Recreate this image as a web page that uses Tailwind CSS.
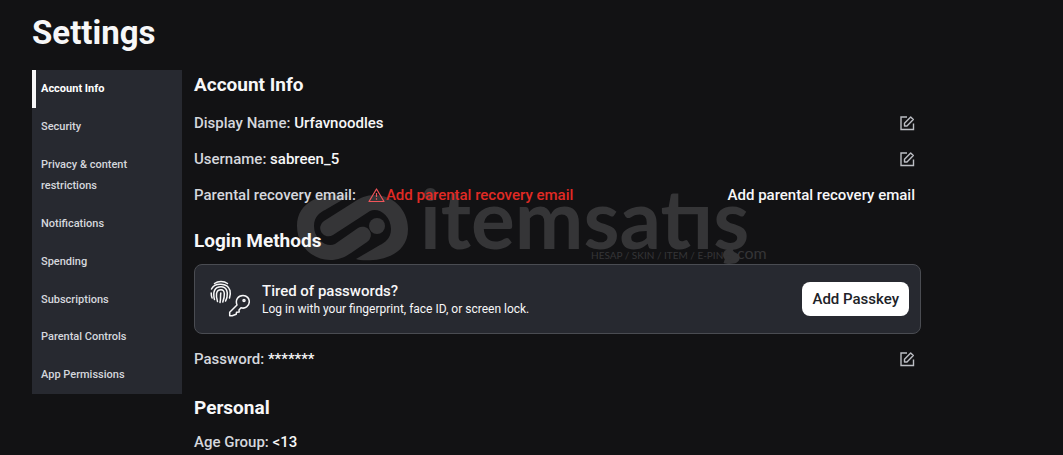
<!DOCTYPE html>
<html lang="en">
<head>
    <meta charset="UTF-8">
    <meta name="viewport" content="width=device-width, initial-scale=1.0">
    <title>Settings</title>
    <script src="https://cdn.jsdelivr.net/npm/@tailwindcss/browser@4"></script>
</head>
<body class="bg-[#121214] font-['Roboto',sans-serif] text-[#f7f7f8] overflow-hidden">
    <!-- Shared icons -->
    <svg class="hidden">
        <symbol id="edit" viewBox="0 0 16 16">
            <path d="M8 2H2v12.500h12.500V8.500" fill="none" stroke="currentColor" stroke-width="1.4"/>
            <path d="M5.500 11V8.200L11.700 2l2.600 2.600L8 11z" fill="none" stroke="currentColor" stroke-width="1.4" stroke-linejoin="round"/>
        </symbol>
    </svg>

    <div class="relative px-8 pt-3">
        <!-- Watermark -->
        <div class="absolute left-[297px] top-[180px] text-[#353537] select-none" aria-hidden="true">
            <svg class="block overflow-visible" width="472" height="84" viewBox="0 0 472 84">
                <g fill="currentColor">
                    <path d="M52 16C45 13 0 12 0 46C0 66 16 80 33 80C42 80 48 77 54 73L70 62A8 8 0 0 0 61 48L38 64C30 68 17 60 17 46C17 36 24 32 28 30Z"/>
                    <path d="M59 79C66 82 111 83 111 49C111 29 95 15 78 15C69 15 63 18 57 22L27 41A8 8 0 0 0 36 55L73 31C81 27 94 35 94 49C94 59 87 63 83 65Z"/>
                    <circle cx="80" cy="46" r="8"/>
                    <circle cx="432" cy="75" r="6"/>
                </g>
                <text x="123" y="69" fill="currentColor" font-family="Lato" font-weight="700" font-size="82">itemsatış</text>
                <text x="294" y="79" fill="currentColor" font-family="Lato" font-size="10">HESAP / SKIN / ITEM / E-PIN</text>
                <text x="440" y="79" fill="currentColor" font-family="Lato" font-size="16">com</text>
            </svg>
        </div>

        <h1 class="relative text-[33px] leading-[42px] font-bold">Settings</h1>

        <div class="relative mt-4 flex items-start gap-3">
            <!-- Sidebar -->
            <nav class="w-[150px] shrink-0 bg-[#272930] flex flex-col text-[11px] leading-[21px] font-medium text-[#d5d7dd]">
                <a href="#" class="border-l-4 border-[#f7f7f8] pl-[5px] pt-2 pb-[9px] font-bold text-white">Account Info</a>
                <a href="#" class="px-[9px] pt-2 pb-[9px]">Security</a>
                <a href="#" class="px-[9px] pt-2 pb-[9px]">Privacy &amp; content restrictions</a>
                <a href="#" class="px-[9px] pt-2 pb-[9px]">Notifications</a>
                <a href="#" class="px-[9px] pt-2 pb-[9px]">Spending</a>
                <a href="#" class="px-[9px] pt-2 pb-2">Subscriptions</a>
                <a href="#" class="px-[9px] pt-2 pb-[9px]">Parental Controls</a>
                <a href="#" class="px-[9px] pt-2 pb-[9px]">App Permissions</a>
            </nav>

            <!-- Content -->
            <main class="flex-1 max-w-[727px] text-[15px] leading-6 font-medium text-[#d5d7dd]">
                <h2 class="pt-[2px] text-[19px] leading-[26px] font-bold text-[#f7f7f8]">Account Info</h2>
                <div class="mt-[13px] flex items-center justify-between pr-[6px]">
                    <p>Display Name: <span class="text-[#f7f7f8]">Urfavnoodles</span></p>
                    <button type="button" aria-label="Edit display name" class="text-[#bcbec4]"><svg class="size-4"><use href="#edit"/></svg></button>
                </div>
                <div class="mt-3 flex items-center justify-between pr-[6px]">
                    <p>Username: <span class="text-[#f7f7f8]">sabreen_5</span></p>
                    <button type="button" aria-label="Edit username" class="text-[#bcbec4]"><svg class="size-4"><use href="#edit"/></svg></button>
                </div>
                <div class="mt-3 flex items-center justify-between pr-[6px]">
                    <p class="flex items-center">Parental recovery email:
                        <svg class="ml-3 mr-px w-[17px] h-4 text-[#f0555a]" viewBox="0 0 17 16" fill="none" stroke="currentColor" stroke-width="1.2" stroke-linejoin="round">
                            <path d="M8.500 2 16 14.500H1z"/>
                            <path d="M8.500 6v4M8.500 11.300v1.400"/>
                        </svg>
                        <span class="text-[#e02a24]">Add parental recovery email</span>
                    </p>
                    <button type="button" class="text-[#f7f7f8]">Add parental recovery email</button>
                </div>

                <h2 class="mt-[21px] text-[19px] leading-[26px] font-bold text-[#f7f7f8]">Login Methods</h2>
                <div class="mt-[10px] flex items-center rounded-lg border border-[#4a4c52] bg-[#272930] h-[70px] pl-[15px] pr-[11px]">
                    <svg class="w-10 h-[38px] shrink-0 text-[#f7f7f8]" viewBox="0 0 40 38" fill="none" stroke="currentColor" stroke-width="1.5" stroke-linecap="round">
                        <path d="M4.500 3.500C8 .8 14 .8 17.500 3.500"/>
                        <path d="M1.500 9C4.500 2.500 17.500 2.500 20 10.500c.7 3 .3 5-.5 7.500"/>
                        <path d="M1.200 13c0 2 .2 3.500.9 5"/>
                        <path d="M4.500 19.500C2.500 12 4.500 6.800 11 6.800c6 0 7 5.500 6 10.200-.3 1.500-.8 2.800-1.500 4"/>
                        <path d="M7.500 21.500C5.800 16 5.500 9.800 11 9.800c4.500 0 3.800 6.500 1.800 12.200"/>
                        <path d="M10.800 13c-.6 3.500.2 5.500-.8 9.500"/>
                        <path d="M27 25c-2-5 1-9.500 6-9.500 4 0 6.300 3 6.300 6 0 5-4.300 7.500-8.300 6.300l-2 2.200.2 2-2.700.3-.3 2-4 1.500h-2.500v-3.500z" stroke-linejoin="round"/>
                        <circle cx="34" cy="20.500" r="1"/>
                    </svg>
                    <div class="ml-3 flex-1 text-[#f7f7f8]">
                        <p class="text-[15px] leading-5">Tired of passwords?</p>
                        <p class="text-xs font-normal">Log in with your fingerprint, face ID, or screen lock.</p>
                    </div>
                    <button type="button" class="h-[34px] rounded-lg bg-white px-[10px] text-[15px] text-[#202227]">Add Passkey</button>
                </div>
                <div class="mt-[13px] flex items-center justify-between pr-[6px]">
                    <p>Password: <span class="text-[#f7f7f8]">*******</span></p>
                    <button type="button" aria-label="Edit password" class="text-[#bcbec4]"><svg class="size-4"><use href="#edit"/></svg></button>
                </div>

                <h2 class="mt-6 text-[19px] leading-[26px] font-bold text-[#f7f7f8]">Personal</h2>
                <p class="mt-[9px]">Age Group: <span class="text-[#f7f7f8]">&lt;13</span></p>
            </main>
        </div>
    </div>
</body>
</html>
